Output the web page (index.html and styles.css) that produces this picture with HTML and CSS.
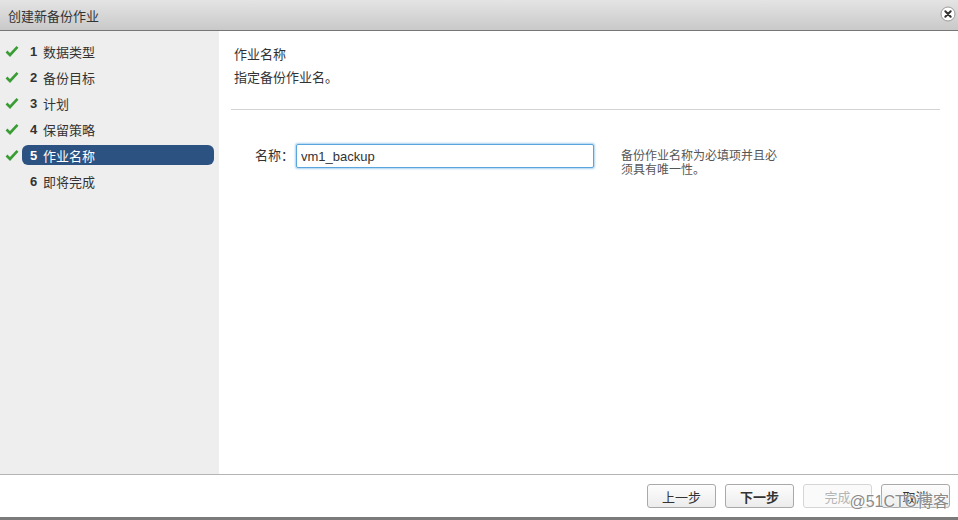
FILE: index.html
```html
<!DOCTYPE html>
<html lang="zh-cn">
<head>
  <meta charset="UTF-8">
  <title>创建新备份作业</title>
  <link rel="stylesheet" href="styles.css">
</head>
<body>
  <div class="dialog">
    <!-- Barra de título -->
    <div class="titlebar">
      <span class="title">创建新备份作业</span>
      <span class="close-btn">
        <svg width="16" height="16" viewBox="0 0 16 16">
          <circle cx="8" cy="8" r="7" fill="#fff" stroke="#9a9a9a" stroke-width="1"/>
          <path d="M5.3 5.3 L10.7 10.7 M10.7 5.3 L5.3 10.7" stroke="#333" stroke-width="2" stroke-linecap="round"/>
        </svg>
      </span>
    </div>

    <div class="dialog-body">
      <!-- Passos do assistente -->
      <ul class="steps">
        <li class="step done"><span class="check"><svg width="14" height="12" viewBox="0 0 14 12"><path d="M1.5 6.5 L5 10 L12.5 1.8" fill="none" stroke="#3a9c34" stroke-width="2.6"/></svg></span><span class="step-label"><b>1</b>数据类型</span></li>
        <li class="step done"><span class="check"><svg width="14" height="12" viewBox="0 0 14 12"><path d="M1.5 6.5 L5 10 L12.5 1.8" fill="none" stroke="#3a9c34" stroke-width="2.6"/></svg></span><span class="step-label"><b>2</b>备份目标</span></li>
        <li class="step done"><span class="check"><svg width="14" height="12" viewBox="0 0 14 12"><path d="M1.5 6.5 L5 10 L12.5 1.8" fill="none" stroke="#3a9c34" stroke-width="2.6"/></svg></span><span class="step-label"><b>3</b>计划</span></li>
        <li class="step done"><span class="check"><svg width="14" height="12" viewBox="0 0 14 12"><path d="M1.5 6.5 L5 10 L12.5 1.8" fill="none" stroke="#3a9c34" stroke-width="2.6"/></svg></span><span class="step-label"><b>4</b>保留策略</span></li>
        <li class="step done active"><span class="check"><svg width="14" height="12" viewBox="0 0 14 12"><path d="M1.5 6.5 L5 10 L12.5 1.8" fill="none" stroke="#3a9c34" stroke-width="2.6"/></svg></span><span class="step-label"><b>5</b>作业名称</span></li>
        <li class="step"><span class="check"></span><span class="step-label"><b>6</b>即将完成</span></li>
      </ul>

      <!-- Conteúdo do passo -->
      <div class="content">
        <div class="content-head">
          <div class="head-title">作业名称</div>
          <div class="head-desc">指定备份作业名。</div>
        </div>
        <div class="form-row">
          <label class="form-label" for="jobName">名称：</label>
          <input type="text" id="jobName" class="form-input" value="vm1_backup">
          <div class="form-help">备份作业名称为必填项并且必<br>须具有唯一性。</div>
        </div>
      </div>
    </div>

    <!-- Botões do rodapé -->
    <div class="footer">
      <button class="btn">上一步</button>
      <button class="btn btn-primary">下一步</button>
      <button class="btn" disabled>完成</button>
      <button class="btn">取消</button>
      <span class="watermark">@51CTO博客</span>
    </div>
  </div>
</body>
</html>
```

FILE: styles.css
```css
* {
  box-sizing: border-box;
  margin: 0;
  padding: 0;
}

body {
  width: 958px;
  height: 520px;
  overflow: hidden;
  background-color: #fff;
  font-family: "Liberation Sans", "Noto Sans CJK SC", sans-serif;
  font-size: 13px;
  color: #333;
}

.dialog {
  display: flex;
  flex-direction: column;
  height: 520px;
  border-bottom: 3px solid #7b7b7b;
  position: relative;
}

/* Barra de título */
.titlebar {
  height: 31px;
  display: flex;
  align-items: center;
  justify-content: space-between;
  padding: 0 2px 0 8px;
  background: linear-gradient(#e4e4e4, #c9c9c9);
  border-bottom: 1px solid #767676;
}

.title {
  font-size: 13px;
  color: #333;
}

.close-btn {
  display: flex;
  margin-top: -2px;
}

.dialog-body {
  flex: 1;
  display: flex;
}

/* Lista de passos */
.steps {
  list-style: none;
  width: 219px;
  background-color: #eeeeee;
  padding-top: 10px;
}

.step {
  display: flex;
  align-items: center;
  height: 20px;
  margin-bottom: 6px;
}

.check {
  width: 22px;
  display: flex;
  justify-content: flex-start;
  padding-left: 5px;
}

.step-label {
  flex: 1;
  height: 20px;
  display: flex;
  align-items: center;
  margin-right: 5px;
  padding-left: 8px;
  border-radius: 6px;
  color: #333;
}

.step-label b {
  width: 13px;
  font-weight: bold;
  color: #333;
}

.step.active .step-label {
  background-color: #2c5282;
  color: #fff;
}

.step.active .step-label b {
  color: #fff;
}

/* Conteúdo */
.content {
  flex: 1;
  padding: 0 18px 0 12px;
}

.content-head {
  padding: 14px 0 21px 3px;
  border-bottom: 1px solid #d3d3d3;
}

.head-title {
  line-height: 20px;
}

.head-desc {
  margin-top: 3px;
  line-height: 20px;
}

.form-row {
  display: flex;
  align-items: flex-start;
  margin-top: 34px;
  padding-left: 24px;
}

.form-label {
  width: 41px;
  line-height: 24px;
  color: #333;
}

.form-input {
  width: 298px;
  height: 24px;
  padding: 0 4px;
  border: 1px solid #5aa6dc;
  border-radius: 2px;
  box-shadow: 0 0 2px 1px #a9d2ef;
  font-family: "Liberation Sans", sans-serif;
  font-size: 13px;
  color: #333;
  outline: none;
}

.form-help {
  margin-left: 27px;
  margin-top: 5px;
  font-size: 12px;
  line-height: 14px;
  color: #555;
}

/* Rodapé */
.footer {
  height: 43px;
  display: flex;
  align-items: center;
  justify-content: flex-end;
  gap: 9px;
  padding-right: 8px;
  border-top: 1px solid #b4b4b4;
  position: relative;
}

.btn {
  width: 69px;
  height: 24px;
  border: 1px solid #a9a9a9;
  border-radius: 3px;
  background: linear-gradient(#fdfdfd, #ececec);
  font-family: "Liberation Sans", "Noto Sans CJK SC", sans-serif;
  font-size: 13px;
  color: #333;
}

.btn-primary {
  font-weight: bold;
}

.btn:disabled {
  border-color: #d6d6d6;
  background: #fafafa;
  color: #b5b5b5;
}

.watermark {
  position: absolute;
  right: 9px;
  top: 13px;
  font-size: 16px;
  color: #8a8a8a;
  text-shadow: 0 0 2px #fff, 0 0 2px #fff;
  pointer-events: none;
}
```
